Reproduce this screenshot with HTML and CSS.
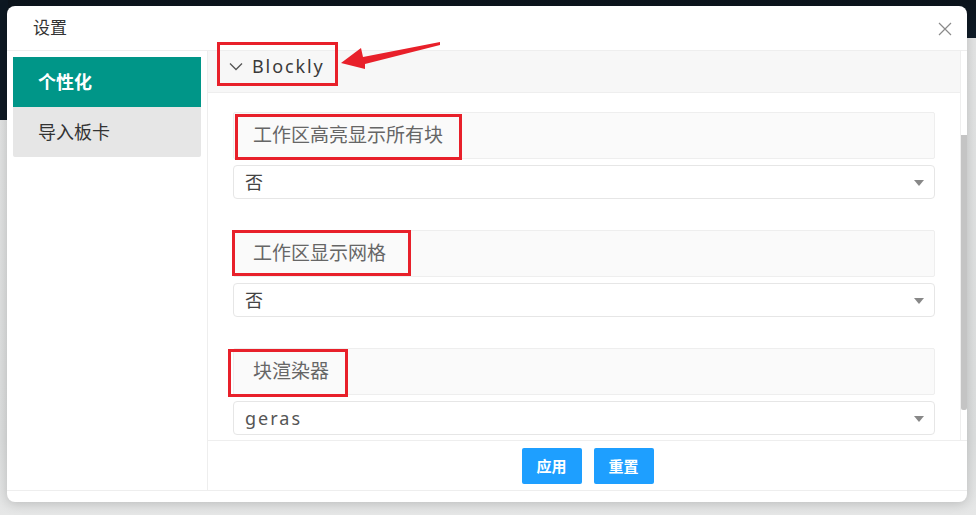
FILE: index.html
```html
<!DOCTYPE html>
<html lang="zh-CN">
<head>
    <meta charset="UTF-8">
    <title>设置</title>
    <link rel="stylesheet" href="styles.css">
</head>
<body>
    <div class="dialog">
        <div class="dialog-header">
            <span class="dialog-title">设置</span>
            <svg class="close-btn" width="14" height="14" viewBox="0 0 14 14">
                <path d="M1 1 L13 13 M13 1 L1 13" stroke="#8a8a8a" stroke-width="1.2" fill="none"/>
            </svg>
        </div>

        <div class="dialog-body">
            <div class="sidebar">
                <div class="side-item active">个性化</div>
                <div class="side-item">导入板卡</div>
            </div>

            <div class="panel">
                <div class="panel-main">
                    <div class="panel-scroll">
                        <div class="collapse-title">
                            <svg class="chevron" width="14" height="9" viewBox="0 0 14 9">
                                <path d="M1 1.5 L7 7.5 L13 1.5" stroke="#555" stroke-width="1.3" fill="none"/>
                            </svg>
                            <span>Blockly</span>
                        </div>
                        <div class="collapse-content">
                            <div class="field">
                                <div class="field-label">工作区高亮显示所有块</div>
                                <div class="field-select">否<i class="caret"></i></div>
                            </div>
                            <div class="field">
                                <div class="field-label">工作区显示网格</div>
                                <div class="field-select">否<i class="caret"></i></div>
                            </div>
                            <div class="field">
                                <div class="field-label">块渲染器</div>
                                <div class="field-select latin">geras<i class="caret"></i></div>
                            </div>
                        </div>
                    </div>
                    <div class="scrollbar"><div class="scroll-thumb"></div></div>
                </div>
                <div class="panel-footer">
                    <button class="btn">应用</button>
                    <button class="btn">重置</button>
                </div>
            </div>
        </div>
    </div>

    <!-- annotation marks drawn over the screenshot -->
    <div class="mark mark-blockly"></div>
    <div class="mark mark-one"></div>
    <div class="mark mark-two"></div>
    <div class="mark mark-three"></div>
    <svg class="arrow" width="976" height="100" viewBox="0 0 976 100">
        <polygon points="341,63 361,48 363,57 440,42 440,45 365,64 365,69" fill="#e8202a"/>
    </svg>
</body>
</html>
```

FILE: styles.css
```css
body {
    margin: 0;
    height: 515px;
    overflow: hidden;
    position: relative;
    font-family: "Noto Sans", "Noto Sans CJK SC", sans-serif;
    background: linear-gradient(to bottom, #0c141c 0, #0f1c28 38px, #e3e4e4 38px, #dcdede 440px, #e6e7e7 100%);
}
body::before {
    content: "";
    position: absolute;
    left: 0;
    top: 0;
    width: 8px;
    height: 120px;
    background: #0d1822;
}
.dialog {
    position: relative;
    margin: 6px 0 0 7px;
    width: 960px;
    height: 496px;
    background: #fff;
    border-radius: 8px;
    box-shadow: 0 2px 12px rgba(0,0,0,0.18);
    display: flex;
    flex-direction: column;
}
.dialog-header {
    height: 44px;
    border-bottom: 1px solid #eee;
    display: flex;
    align-items: center;
    justify-content: space-between;
    padding: 0 15px 0 26px;
}
.dialog-title {
    font-size: 17px;
    color: #333;
    margin-bottom: 3px;
}
.close-btn {
    margin-top: 2px;
}
.dialog-body {
    height: 439px;
    border-bottom: 1px solid #eee;
    display: flex;
}
.sidebar {
    width: 188px;
    padding: 6px 6px 0;
}
.side-item {
    height: 50px;
    line-height: 50px;
    padding-left: 25px;
    font-size: 18px;
    color: #333;
    background: #e6e6e6;
}
.side-item:last-child {
    border-radius: 0 0 2px 2px;
}
.side-item.active {
    background: #009688;
    color: #fff;
    font-weight: bold;
}
.panel {
    flex: 1;
    border-left: 1px solid #eee;
    display: flex;
    flex-direction: column;
}
.panel-main {
    height: 389px;
    display: flex;
}
.panel-scroll {
    flex: 1;
    overflow: hidden;
    border-right: 1px solid #eee;
}
.scrollbar {
    width: 6px;
}
.scroll-thumb {
    margin-top: 84px;
    height: 275px;
    background: #c4c4c4;
    border-radius: 0 0 2px 2px;
}
.collapse-title {
    height: 29px;
    padding: 0 0 12px 21px;
    border-bottom: 1px solid #eee;
    background: #f7f7f7;
    display: flex;
    align-items: center;
    font-size: 18px;
    color: #3a3a3a;
    letter-spacing: 1.9px;
}
.chevron {
    margin-right: 9px;
    margin-top: 1px;
}
.collapse-content {
    padding: 19px 25px 0;
}
.field {
    margin-bottom: 31px;
}
.field-label {
    height: 45px;
    line-height: 45px;
    border: 1px solid #eee;
    border-radius: 2px;
    background: #fafafa;
    padding-left: 19px;
    font-size: 19px;
    color: #666;
}
.field-select {
    margin-top: 6px;
    height: 32px;
    line-height: 32px;
    border: 1px solid #e6e6e6;
    border-radius: 4px;
    padding-left: 11px;
    font-size: 18px;
    color: #444;
    position: relative;
}
.field-select.latin {
    letter-spacing: 2px;
    color: #555;
}
.caret {
    position: absolute;
    right: 10px;
    top: 14px;
    border-left: 5px solid transparent;
    border-right: 5px solid transparent;
    border-top: 6px solid #888;
}
.panel-footer {
    flex: 1;
    border-top: 1px solid #eee;
    display: flex;
    align-items: center;
    justify-content: center;
    gap: 12px;
}
.btn {
    width: 60px;
    height: 36px;
    border: none;
    border-radius: 2px;
    background: #1e9fff;
    color: #fff;
    font-family: "Noto Sans CJK SC", sans-serif;
    font-size: 15px;
    font-weight: bold;
    cursor: pointer;
}
.mark {
    position: absolute;
    border: 3px solid #e8202a;
}
.mark-blockly {
    left: 217px;
    top: 42px;
    width: 115px;
    height: 38px;
}
.mark-one {
    left: 235px;
    top: 114px;
    width: 221px;
    height: 40px;
}
.mark-two {
    left: 232px;
    top: 230px;
    width: 173px;
    height: 40px;
}
.mark-three {
    left: 228px;
    top: 349px;
    width: 114px;
    height: 42px;
}
.arrow {
    position: absolute;
    left: 0;
    top: 0;
}
```
